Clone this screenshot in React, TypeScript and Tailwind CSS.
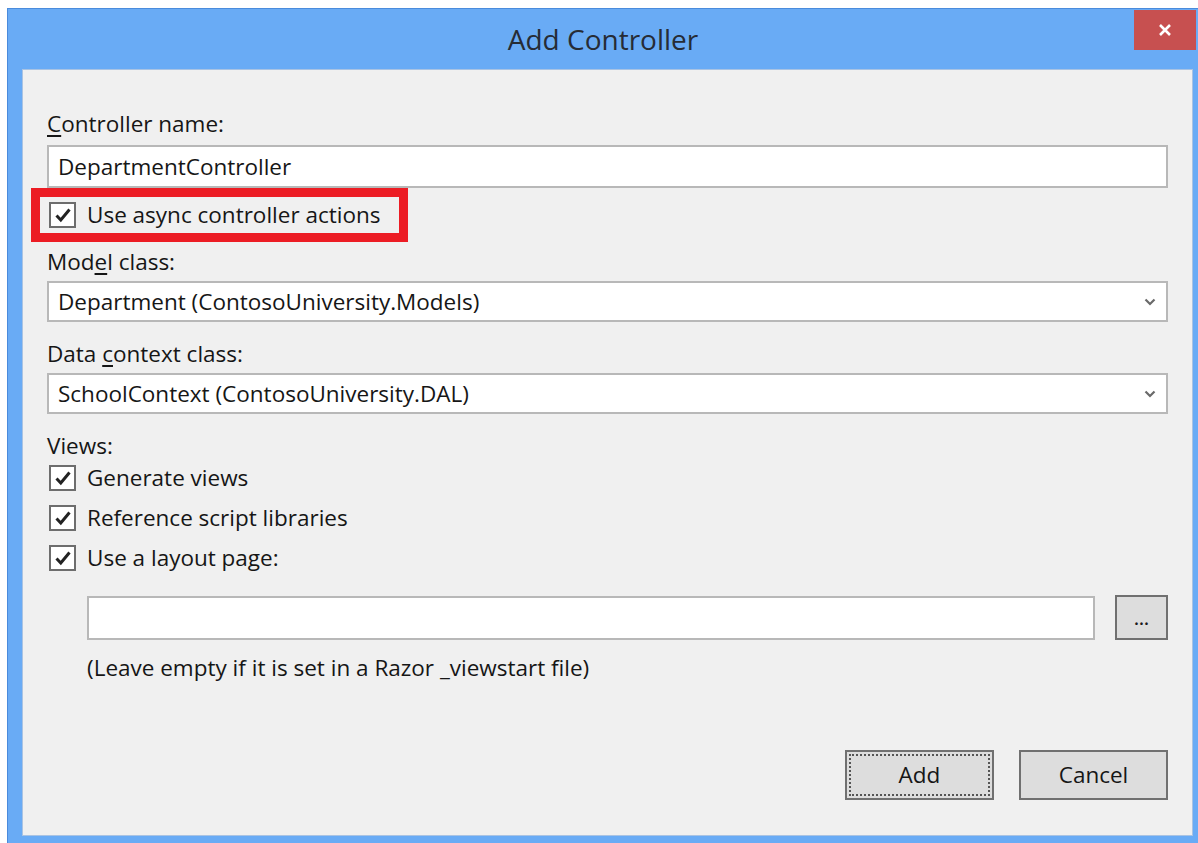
import type { ReactNode } from "react";

const font = { fontFamily: '"Open Sans", "Noto Sans", "Liberation Sans", sans-serif' };

function CheckBox() {
  return (
    <span className="flex h-[26px] w-[27px] shrink-0 items-center justify-center border-2 border-[#6d6d6d] bg-white">
      <svg width="18" height="16" viewBox="0 0 18 16">
        <path d="M2.5 8.5 L6.8 13 L15.5 2.5" fill="none" stroke="#222" strokeWidth="3" />
      </svg>
    </span>
  );
}

function CheckRow({ label, className = "" }: { label: string; className?: string }) {
  return (
    <label className={`flex h-10 items-center pl-[2px] ${className}`}>
      <CheckBox />
      <span className="ml-[11px] text-[22.5px] text-[#161616]">{label}</span>
    </label>
  );
}

function Label({ children, className = "" }: { children: ReactNode; className?: string }) {
  return <div className={`h-7 text-[22.5px] leading-7 text-[#161616] ${className}`}>{children}</div>;
}

function Select({ value, className = "" }: { value: string; className?: string }) {
  return (
    <div
      className={`flex h-[41px] items-center justify-between border-2 border-[#b8b8b8] bg-white pl-[9px] pr-[10px] text-[22.5px] text-[#161616] ${className}`}
    >
      <span>{value}</span>
      <svg width="12" height="8" viewBox="0 0 12 8">
        <path d="M1.5 1.5 L6 6 L10.5 1.5" fill="none" stroke="#6a6a6a" strokeWidth="2.2" />
      </svg>
    </div>
  );
}

export default function App() {
  return (
    <div className="h-[843px] w-[1198px] overflow-hidden bg-white pl-[7px] pt-[8px]" style={font}>
      <div className="flex h-[835px] w-[1191px] flex-col border-l border-t border-[#4a8bdc] bg-[#69abf5]">
        {/* title bar */}
        <div className="relative flex h-[60px] items-center justify-center">
          <span className="text-[28px] text-[#262c36]">Add Controller</span>
          <div className="absolute right-[2px] top-[1px] flex h-[40px] w-[62px] items-center justify-center bg-[#c75050]">
            <svg width="14" height="14" viewBox="0 0 14 14">
              <path d="M2 2 L12 12 M12 2 L2 12" stroke="#fff" strokeWidth="2.6" />
            </svg>
          </div>
        </div>

        {/* dialog body */}
        <div className="ml-[14px] mr-[5px] flex h-[767px] flex-col border border-[#a9c3e3] bg-[#f0f0f0] pl-[24px] pr-[24px]">
          <Label className="mt-[40px]">
            <span className="underline underline-offset-[3px]">C</span>ontroller name:
          </Label>
          <div className="mt-[7px] flex h-[43px] items-center border-2 border-[#b8b8b8] bg-white pl-[9px] text-[22.5px] text-[#161616]">
            DepartmentController
          </div>

          <div className="relative flex h-[54px] items-center">
            <CheckRow label="Use async controller actions" />
            <div className="pointer-events-none absolute -left-[16px] top-0 h-[54px] w-[377px] border-[9px] border-[#ec1c24]" />
          </div>

          <Label className="mt-[6px]">
            Mod<span className="underline underline-offset-[3px]">e</span>l class:
          </Label>
          <Select className="mt-[5px]" value="Department (ContosoUniversity.Models)" />

          <Label className="mt-[18px]">
            Data <span className="underline underline-offset-[3px]">c</span>ontext class:
          </Label>
          <Select className="mt-[5px]" value="SchoolContext (ContosoUniversity.DAL)" />

          <Label className="mt-[18px]">Views:</Label>
          <CheckRow label="Generate views" className="-mt-[2px]" />
          <CheckRow label="Reference script libraries" />
          <CheckRow label="Use a layout page:" />

          <div className="ml-[40px] mt-[17px] flex items-center gap-[20px]">
            <div className="h-[44px] flex-1 border-2 border-[#b8b8b8] bg-white" />
            <div className="flex h-[45px] w-[53px] items-end justify-center border-2 border-[#707070] bg-[#dddddd] pb-[11px] text-[18px] font-semibold leading-none text-[#1b1b1b]">
              ...
            </div>
          </div>
          <Label className="ml-[40px] mt-[14px]">(Leave empty if it is set in a Razor _viewstart file)</Label>

          <div className="mt-[68px] flex justify-end gap-[25px]">
            <div className="flex h-[50px] w-[149px] items-center justify-center border-2 border-[#707070] bg-[#dddddd] p-[2px]">
              <div className="flex h-full w-full items-center justify-center border-2 border-dotted border-[#555]">
                <span className="text-[22.5px] text-[#161616]">Add</span>
              </div>
            </div>
            <div className="flex h-[50px] w-[149px] items-center justify-center border-2 border-[#707070] bg-[#dddddd] text-[22.5px] text-[#161616]">
              Cancel
            </div>
          </div>
        </div>
      </div>
    </div>
  );
}
